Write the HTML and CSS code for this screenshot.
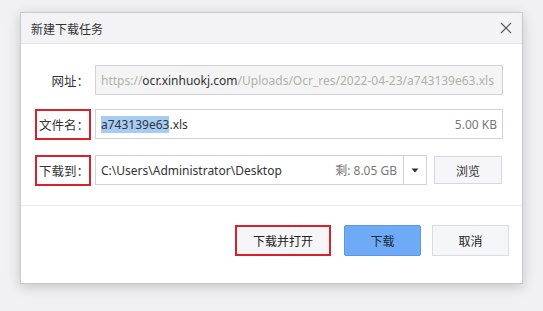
FILE: index.html
```html
<!DOCTYPE html>
<html lang="zh-CN">
<head>
<meta charset="utf-8">
<link rel="stylesheet" href="styles.css">
</head>
<body>
<div class="dialog">
  <div class="titlebar">
    <span class="title">新建下载任务</span>
    <svg class="close" width="12" height="12" viewBox="0 0 12 12"><path d="M1 1L11 11M11 1L1 11" stroke="#555" stroke-width="1.1" fill="none"/></svg>
  </div>
  <div class="content">
    <div class="row">
      <div class="label"><span class="lbox">网址：</span></div>
      <div class="field disabled"><span class="muted">https://</span><span class="dark">ocr.xinhuokj.com</span><span class="muted">/Uploads/Ocr_res/2022-04-23/a743139e63.xls</span></div>
    </div>
    <div class="row r2">
      <div class="label"><span class="lbox hl">文件名：</span></div>
      <div class="field"><span class="sel">a743139e63</span><span class="dark">.xls</span><span class="spacer"></span><span class="size">5.00 KB</span></div>
    </div>
    <div class="row r3">
      <div class="label"><span class="lbox hl">下载到：</span></div>
      <div class="combo">
        <div class="combo-text"><span class="dark">C:\Users\Administrator\Desktop</span><span class="spacer"></span><span class="size">剩: 8.05 GB</span></div>
        <div class="combo-btn"><svg width="8" height="5" viewBox="0 0 8 5"><path d="M0.5 0.5H7.5L4 4.5Z" fill="#333"/></svg></div>
      </div>
      <div class="browse">浏览</div>
    </div>
  </div>
  <div class="footer">
    <div class="btn open">下载并打开</div>
    <div class="btn primary">下载</div>
    <div class="btn cancel">取消</div>
  </div>
</div>
</body>
</html>
```
FILE: styles.css
```css
html, body {
  margin: 0;
  padding: 0;
}
body {
  width: 543px;
  height: 311px;
  background: #f1f1f3;
  font-family: "Noto Sans", "Noto Sans CJK SC", sans-serif;
  font-size: 12px;
  color: #333;
  overflow: hidden;
}
.dialog {
  margin: 12px 0 0 20px;
  width: 501px;
  height: 270px;
  background: #fff;
  border: 1px solid #c9c9cd;
  box-shadow: 0 3px 12px rgba(0,0,0,0.18);
  display: flex;
  flex-direction: column;
}
.titlebar {
  height: 30px;
  background: #f3f3f6;
  border-bottom: 1px solid #e6e6ea;
  display: flex;
  align-items: center;
  padding: 0 10px 0 10px;
}
.title {
  font-family: "Noto Sans CJK SC", sans-serif;
  font-size: 12px;
  color: #333;
  flex: 1;
}
.close {
  display: block;
}
.content {
  padding: 21px 19px 0 0;
  height: 140px;
  border-bottom: 1px solid #eef0f3;
}
.row {
  display: flex;
  align-items: center;
  height: 30px;
}
.r2 { margin-top: 14px; }
.r3 { margin-top: 16px; }
.label {
  width: 74px;
  display: flex;
  justify-content: flex-end;
}
.lbox {
  box-sizing: border-box;
  width: 56px;
  height: 31px;
  margin-right: 4px;
  border: 2px solid transparent;
  display: flex;
  align-items: center;
  justify-content: flex-end;
  font-family: "Noto Sans CJK SC", sans-serif;
  font-size: 12.5px;
  color: #333;
}
.lbox.hl {
  border-color: #d8222b;
}
.field {
  flex: 1;
  box-sizing: border-box;
  height: 30px;
  border: 1px solid #d2d2d6;
  display: flex;
  align-items: center;
  padding: 0 5px;
  white-space: nowrap;
  overflow: hidden;
}
.field.disabled {
  background: #f4f4f4;
}
.muted { color: #b0b0b0; }
.dark { color: #333; }
.sel {
  background: #a6ccf3;
  color: #333;
}
.spacer { flex: 1; }
.size { color: #777; }
.combo {
  box-sizing: border-box;
  width: 332px;
  height: 30px;
  border: 1px solid #d2d2d6;
  display: flex;
}
.combo-text {
  flex: 1;
  display: flex;
  align-items: center;
  padding: 0 6px 0 5px;
  white-space: nowrap;
}
.combo-btn {
  width: 22px;
  border-left: 1px solid #d2d2d6;
  display: flex;
  align-items: center;
  justify-content: center;
}
.browse {
  box-sizing: border-box;
  margin-left: 7px;
  width: 68px;
  height: 28px;
  border: 1px solid #d8d8dc;
  background: #f6f6f8;
  display: flex;
  align-items: center;
  justify-content: center;
  font-family: "Noto Sans CJK SC", sans-serif;
  font-size: 12px;
}
.footer {
  flex: 1;
  display: flex;
  justify-content: flex-end;
  align-items: flex-start;
  padding: 19px 13px 0 0;
}
.btn {
  box-sizing: border-box;
  height: 31px;
  display: flex;
  align-items: center;
  justify-content: center;
  font-family: "Noto Sans CJK SC", sans-serif;
  font-size: 12px;
  color: #222;
}
.open {
  width: 96px;
  border: 2px solid #d8222b;
  background: #f5f5f8;
}
.primary {
  width: 77px;
  margin-left: 13px;
  background: #6eaaf6;
  border: 1px solid #5a97e6;
  border-radius: 2px;
  color: #1d2a3a;
}
.cancel {
  width: 77px;
  margin-left: 11px;
  background: #f5f6f8;
  border: 1px solid #dcdce0;
}
```
